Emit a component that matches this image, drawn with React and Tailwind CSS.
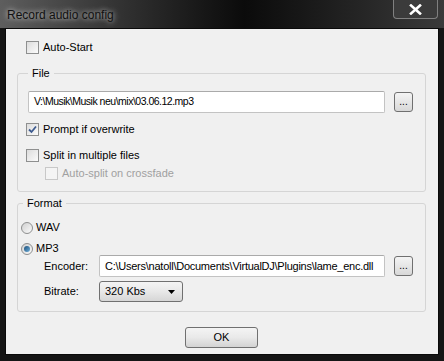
import React, { useState } from 'react';

// Win7-style dialog: checkbox, radio and push buttons drawn with plain divs
function CheckBox({ checked, disabled, label, onChange }) {
    return (
        <label className={`flex items-center gap-[4px] h-[13px] ${disabled ? 'text-[#a0a0a0]' : 'text-black'}`}>
            <span
                className={`w-[13px] h-[13px] border flex items-center justify-center ${disabled ? 'border-[#c8c8c8] bg-[#f4f4f4]' : 'border-[#8e8f8f] bg-gradient-to-br from-[#dcdcdc] to-[#fbfbfb]'}`}
                onClick={() => !disabled && onChange && onChange(!checked)}
            >
                {checked && (
                    <svg width="9" height="9" viewBox="0 0 9 9">
                        <path d="M1 4.5 L3.5 7 L8 1.5" fill="none" stroke="#3d5a8f" strokeWidth="1.8" />
                    </svg>
                )}
            </span>
            <span>{label}</span>
        </label>
    );
}

function Radio({ checked, label, onClick }) {
    return (
        <label className="flex items-center gap-[3px] h-[13px]" onClick={onClick}>
            <span className="w-[12px] h-[12px] rounded-full border border-[#8e8f8f] bg-gradient-to-br from-[#d0d0d0] to-[#fbfbfb] flex items-center justify-center">
                {checked && <span className="w-[6px] h-[6px] rounded-full bg-gradient-to-br from-[#1b4f79] to-[#6fb0dc]" />}
            </span>
            <span>{label}</span>
        </label>
    );
}

function DotsButton() {
    return (
        <button className="w-[19px] h-[20px] border border-[#707070] rounded-[3px] bg-gradient-to-b from-[#f4f4f4] to-[#d8d8d8] text-[10px] leading-none flex items-end justify-center pb-[4px]">
            ...
        </button>
    );
}

function TextBox({ value, className }) {
    return (
        <div className={`h-[22px] bg-white border border-[#c3c3c3] border-t-[#aaaaaa] rounded-[2px] flex items-center px-[5px] whitespace-nowrap overflow-hidden ${className}`}>
            {value}
        </div>
    );
}

export default function App() {
    const [autoStart, setAutoStart] = useState(false);
    const [prompt, setPrompt] = useState(true);
    const [split, setSplit] = useState(false);
    const [format, setFormat] = useState('mp3');

    return (
        <div className="w-[444px] h-[361px] bg-[#151515] flex flex-col overflow-hidden text-[11px] font-['Liberation_Sans',Arial,sans-serif]">
            {/* title bar */}
            <div className="h-[28px] flex items-start bg-gradient-to-r from-[#5e5e5e] via-[#0b0b0b] via-55% to-[#3a3a3a]">
                <div className="pl-[7px] pt-[6px] text-[12px] text-[#111] [text-shadow:0_0_5px_rgba(255,255,255,0.7),0_0_10px_rgba(255,255,255,0.35)]">Record audio config</div>
                <div className="ml-auto mr-[6px] w-[45px] h-[19px] border border-[#808080] border-t-0 rounded-b-[4px] bg-[#3b3b3b] flex items-center justify-center">
                    <svg width="13" height="11" viewBox="0 0 13 11">
                        <path d="M2 1.5 L11 9.5 M11 1.5 L2 9.5" stroke="#ffffff" strokeWidth="2.6" strokeLinecap="square" />
                    </svg>
                </div>
            </div>

            {/* client area */}
            <div className="mx-[5px] mb-[6px] flex-1 border border-[#0a0a0a] bg-[#f0f0f0] flex flex-col pl-[11px] pr-[12px]">
                <div className="mt-[12px] ml-[9px]">
                    <CheckBox label="Auto-Start" checked={autoStart} onChange={setAutoStart} />
                </div>

                <fieldset className="mt-[12px] border border-[#d5d5d5] rounded-[3px] pl-[8px] pr-[12px] pt-[11px] pb-[11px]">
                    <legend className="ml-[2px] px-[4px] leading-[14px]">File</legend>
                    <div className="flex items-center ml-[2px]">
                        <TextBox className="flex-1 text-[10.5px] tracking-[-0.5px]" value={'V:\\Musik\\Musik neu\\mix\\03.06.12.mp3'} />
                        <div className="ml-[9px]">
                            <DotsButton />
                        </div>
                    </div>
                    <div className="mt-[10px]">
                        <CheckBox label="Prompt if overwrite" checked={prompt} onChange={setPrompt} />
                    </div>
                    <div className="mt-[13px]">
                        <CheckBox label="Split in multiple files" checked={split} onChange={setSplit} />
                    </div>
                    <div className="mt-[5px] ml-[19px]">
                        <CheckBox label="Auto-split on crossfade" disabled />
                    </div>
                </fieldset>

                <fieldset className="mt-[4px] border border-[#d5d5d5] rounded-[3px] pl-[3px] pr-[12px] pt-[11px] pb-[9px]">
                    <legend className="ml-[2px] px-[4px] leading-[14px]">Format</legend>
                    <Radio label="WAV" checked={format === 'wav'} onClick={() => setFormat('wav')} />
                    <div className="mt-[8px]">
                        <Radio label="MP3" checked={format === 'mp3'} onClick={() => setFormat('mp3')} />
                    </div>
                    <div className="flex items-center">
                        <span className="w-[55px] ml-[23px]">Encoder:</span>
                        <TextBox className="flex-1 tracking-[-0.25px]" value={'C:\\Users\\natoll\\Documents\\VirtualDJ\\Plugins\\lame_enc.dll'} />
                        <div className="ml-[9px]">
                            <DotsButton />
                        </div>
                    </div>
                    <div className="flex items-center mt-[4px]">
                        <span className="w-[55px] ml-[23px]">Bitrate:</span>
                        <div className="w-[84px] h-[21px] border border-[#707070] rounded-[3px] bg-gradient-to-b from-[#f4f4f4] via-[#e8e8e8] to-[#d6d6d6] flex items-center pl-[5px] pr-[7px]">
                            <span>320 Kbs</span>
                            <svg className="ml-auto" width="7" height="4" viewBox="0 0 7 4">
                                <path d="M0 0 L7 0 L3.5 4 Z" fill="#000" />
                            </svg>
                        </div>
                    </div>
                </fieldset>

                <div className="mt-[15px] flex justify-center">
                    <button className="w-[73px] h-[21px] border border-[#707070] rounded-[3px] bg-gradient-to-b from-[#f4f4f4] via-[#e9e9e9] to-[#d3d3d3]">
                        OK
                    </button>
                </div>
            </div>
        </div>
    );
}
